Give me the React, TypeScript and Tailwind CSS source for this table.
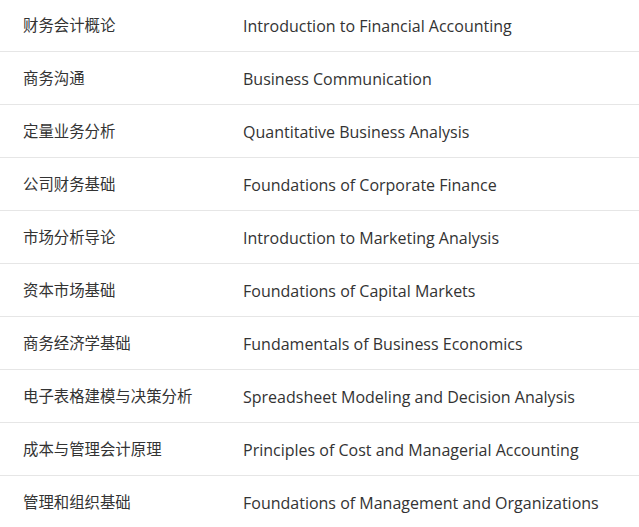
const courses: [string, string][] = [
  ["财务会计概论", "Introduction to Financial Accounting"],
  ["商务沟通", "Business Communication"],
  ["定量业务分析", "Quantitative Business Analysis"],
  ["公司财务基础", "Foundations of Corporate Finance"],
  ["市场分析导论", "Introduction to Marketing Analysis"],
  ["资本市场基础", "Foundations of Capital Markets"],
  ["商务经济学基础", "Fundamentals of Business Economics"],
  ["电子表格建模与决策分析", "Spreadsheet Modeling and Decision Analysis"],
  ["成本与管理会计原理", "Principles of Cost and Managerial Accounting"],
  ["管理和组织基础", "Foundations of Management and Organizations"],
];

export default function App() {
  return (
    <div
      className="w-[639px] h-[527px] overflow-hidden bg-white text-[#333]"
      style={{ fontFamily: '"Open Sans", "Noto Sans CJK SC", sans-serif' }}
    >
      <div className="-mt-px flex flex-col">
        {courses.map(([zh, en]) => (
          <div key={en} className="flex h-[53px] shrink-0 items-center border-b border-[#e6e6e6] pt-[2px]">
            <div className="w-[243px] shrink-0 pl-[23px] text-[15.4px]">{zh}</div>
            <div className="text-[16px]">{en}</div>
          </div>
        ))}
      </div>
    </div>
  );
}
